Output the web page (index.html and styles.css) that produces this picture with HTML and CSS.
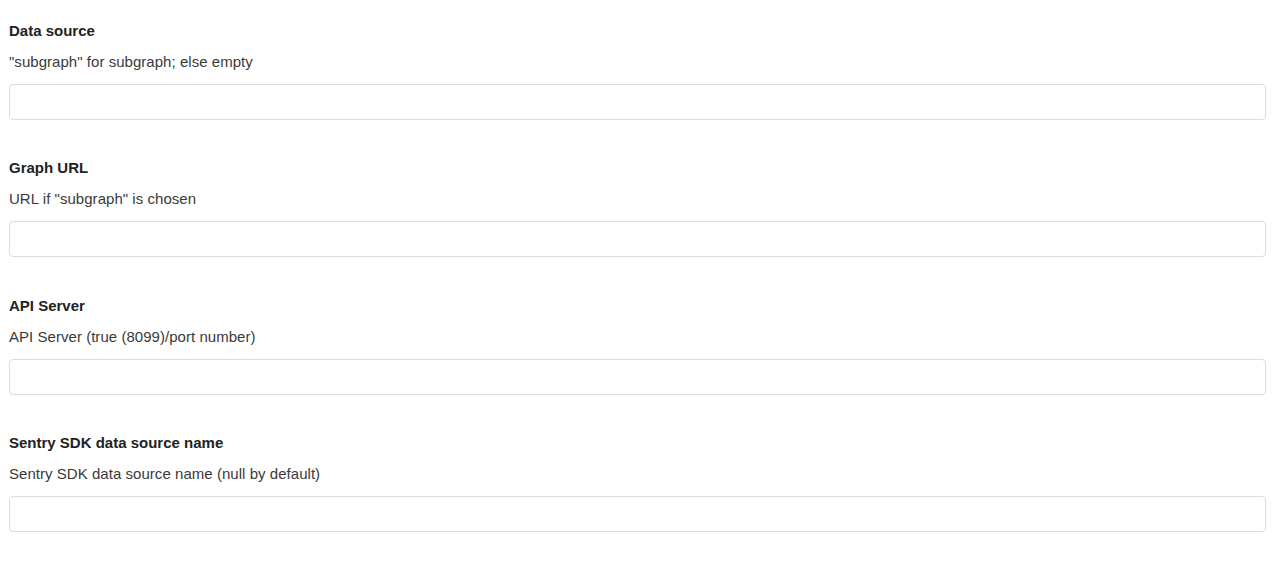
FILE: index.html
```html
<!DOCTYPE html>
<html lang="en">
<head>
<meta charset="utf-8">
<title>Settings</title>
<link rel="stylesheet" href="styles.css">
</head>
<body>
<form class="settings">
  <div class="field">
    <label class="field-label" for="f1">Data source</label>
    <div class="field-desc">"subgraph" for subgraph; else empty</div>
    <input class="field-input" id="f1" type="text">
  </div>
  <div class="field">
    <label class="field-label" for="f2">Graph URL</label>
    <div class="field-desc">URL if "subgraph" is chosen</div>
    <input class="field-input" id="f2" type="text">
  </div>
  <div class="field">
    <label class="field-label" for="f3">API Server</label>
    <div class="field-desc">API Server (true (8099)/port number)</div>
    <input class="field-input" id="f3" type="text">
  </div>
  <div class="field">
    <label class="field-label" for="f4">Sentry SDK data source name</label>
    <div class="field-desc">Sentry SDK data source name (null by default)</div>
    <input class="field-input" id="f4" type="text">
  </div>
</form>
</body>
</html>
```
FILE: styles.css
```css
html, body {
  margin: 0;
  padding: 0;
  background: #fff;
}
body {
  font-family: "Liberation Sans", Arial, sans-serif;
  font-size: 15px;
  color: #333;
}
.settings {
  display: flex;
  flex-direction: column;
  gap: 38.4px;
  padding: 21px 14px 0 9px;
}
.field {
  display: flex;
  flex-direction: column;
}
.field-label {
  font-weight: bold;
  line-height: 20px;
  color: #222;
  margin-bottom: 11px;
}
.field-desc {
  line-height: 20px;
  color: #3a3a3a;
  margin-bottom: 12px;
  letter-spacing: 0.04px;
}
.field-input {
  box-sizing: border-box;
  height: 36px;
  width: 100%;
  margin: 0;
  border: 1px solid #dcdcdc;
  border-radius: 4px;
  background: #fff;
  font: inherit;
  padding: 6px 12px;
}
```
